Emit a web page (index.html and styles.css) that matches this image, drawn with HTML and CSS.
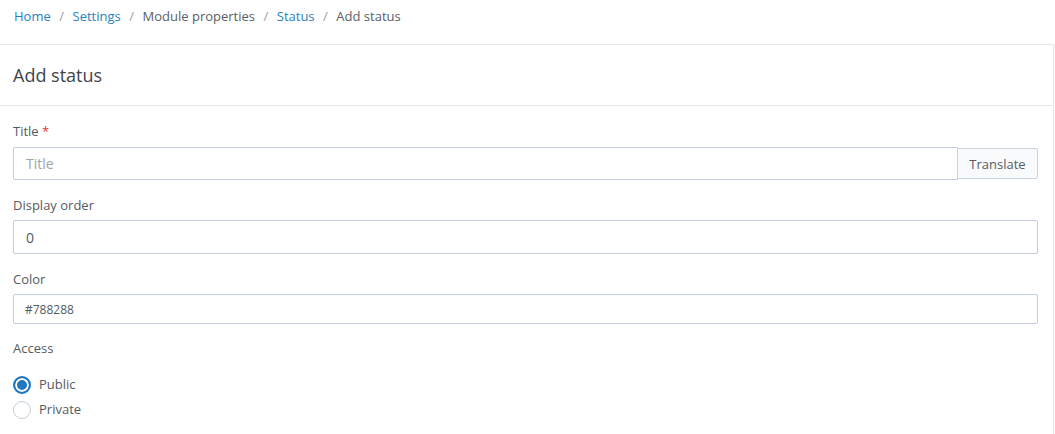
FILE: index.html
```html
<!DOCTYPE html>
<html>
<head>
<meta charset="utf-8">
<link rel="stylesheet" href="styles.css">
</head>
<body>
<nav class="breadcrumb">
  <a href="#">Home</a><span class="sep">/</span>
  <a href="#">Settings</a><span class="sep">/</span>
  <span class="crumb">Module properties</span><span class="sep">/</span>
  <a href="#">Status</a><span class="sep">/</span>
  <span class="crumb">Add status</span>
</nav>
<section class="card">
  <header class="card-header">Add status</header>
  <div class="card-body">
    <div class="group">
      <label class="label">Title <span class="req">*</span></label>
      <div class="input-row">
        <input class="input" type="text" placeholder="Title">
        <button class="btn" type="button">Translate</button>
      </div>
    </div>
    <div class="group">
      <label class="label">Display order</label>
      <input class="input" type="text" value="0">
    </div>
    <div class="group">
      <label class="label">Color</label>
      <input class="input input-sm" type="text" value="#788288">
    </div>
    <div class="group group-last">
      <label class="label">Access</label>
      <div class="radios">
        <label class="radio"><input type="radio" name="access" checked><span>Public</span></label>
        <label class="radio"><input type="radio" name="access"><span>Private</span></label>
      </div>
    </div>
  </div>
</section>
</body>
</html>
```

FILE: styles.css
```css
* { box-sizing: border-box; }
body {
  margin: 0;
  font-family: "Open Sans", "Noto Sans", sans-serif;
  font-size: 13px;
  color: #555b61;
  background: #fff;
}
.breadcrumb {
  height: 44px;
  display: flex;
  align-items: center;
  padding: 0 14px 12px;
  font-size: 13px;
  color: #5a6066;
}
.breadcrumb a { color: #2a7fbe; text-decoration: none; }
.breadcrumb .sep { color: #9aa1a8; margin: 0 8.5px; }
.card {
  width: 1054px;
  border-top: 1px solid #e3e6ea;
  border-right: 1px solid #e3e6ea;
  border-bottom: 1px solid #e3e6ea;
}
.card-header {
  height: 61px;
  display: flex;
  align-items: center;
  padding: 0 13px 1px;
  font-size: 18px;
  color: #3f454b;
  border-bottom: 1px solid #e3e6ea;
}
.card-body {
  padding: 15px 15px 16px 13px;
}
.group { margin-bottom: 15px; }
.group-last { margin-top: -1px; }
.label {
  display: block;
  line-height: 20px;
  margin-bottom: 5px;
  color: #555b61;
}
.group:first-child .label { margin-bottom: 6px; }
.req { color: #e0322c; }
.input-row { display: flex; align-items: center; }
.input {
  display: block;
  width: 100%;
  height: 34px;
  padding: 0 12px;
  border: 1px solid #c3ced8;
  border-radius: 2px;
  font-family: inherit;
  font-size: 14px;
  color: #555b61;
  background: #fff;
  outline: none;
}
.input::placeholder { color: #a0a5aa; }
.input-row .input { flex: 1; width: auto; border-radius: 2px 0 0 2px; height: 33px; }
.input-sm { height: 30px; font-size: 12px; padding: 0 11px; }
.btn {
  flex: none;
  width: 81px;
  height: 31px;
  margin-left: -1px;
  border: 1px solid #ccd4db;
  border-radius: 0 2px 2px 0;
  background: #f9fafb;
  font-family: inherit;
  font-size: 13px;
  color: #555b61;
  padding: 0;
}
.radios { padding-top: 11px; display: flex; flex-direction: column; gap: 4px; }
.radio { display: flex; align-items: center; gap: 8px; line-height: 21px; color: #555b61; }
.radio input {
  appearance: none;
  -webkit-appearance: none;
  margin: 0;
  width: 18px;
  height: 18px;
  border: 1px solid #c3ced8;
  border-radius: 50%;
  background: #fff;
}
.radio input:checked {
  border: 2px solid #1f78bf;
  background: #1f78bf;
  box-shadow: inset 0 0 0 2px #fff;
}
```
